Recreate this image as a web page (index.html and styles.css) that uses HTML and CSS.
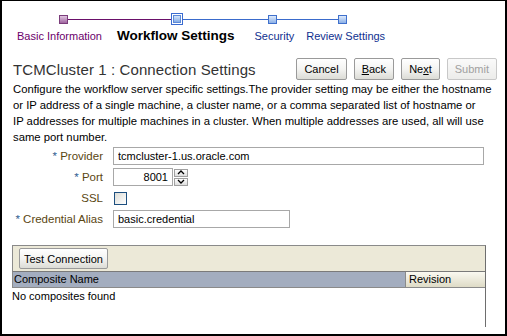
FILE: index.html
```html
<!DOCTYPE html>
<html>
<head>
<meta charset="utf-8">
<title>TCMCluster 1 : Connection Settings</title>
<link rel="stylesheet" href="styles.css">
</head>
<body>
<div class="frame">
  <div class="train">
    <div class="stop">
      <div class="track"><span class="seg"></span><span class="mark visited"></span><span class="seg purple"></span></div>
      <div class="lbl visited-lbl">Basic Information</div>
    </div>
    <div class="stop stop-current">
      <div class="track"><span class="seg purple"></span><span class="mark current"><span class="inner"></span></span><span class="seg blue"></span></div>
      <div class="lbl current-lbl">Workflow Settings</div>
    </div>
    <div class="stop stop-security">
      <div class="track"><span class="seg blue"></span><span class="mark todo"></span><span class="seg blue"></span></div>
      <div class="lbl todo-lbl">Security</div>
    </div>
    <div class="stop stop-review">
      <div class="track"><span class="seg blue"></span><span class="mark todo"></span><span class="seg"></span></div>
      <div class="lbl todo-lbl">Review Settings</div>
    </div>
  </div>

  <div class="content">
    <div class="titlerow">
      <h1 class="title">TCMCluster 1 : Connection Settings</h1>
      <div class="buttons">
        <button class="btn">Cancel</button>
        <button class="btn"><u>B</u>ack</button>
        <button class="btn">Ne<u>x</u>t</button>
        <button class="btn disabled">Submit</button>
      </div>
    </div>
    <p class="desc">Configure the workflow server specific settings.The provider setting may be either the hostname or IP address of a single machine, a cluster name, or a comma separated list of hostname or<br>IP addresses for multiple machines in a cluster. When multiple addresses are used, all will use same port number.</p>

    <div class="form">
      <label class="flabel"><span class="req">*</span> Provider</label>
      <div class="field"><input class="text wide" value="tcmcluster-1.us.oracle.com"></div>

      <label class="flabel"><span class="req">*</span> Port</label>
      <div class="field port">
        <input class="text num" value="8001">
        <div class="spin">
          <span class="sbtn"><svg width="8" height="5" viewBox="0 0 8 5"><path d="M1 4 L4 1 L7 4" fill="none" stroke="#000" stroke-width="1.3"/></svg></span>
          <span class="sbtn"><svg width="8" height="5" viewBox="0 0 8 5"><path d="M1 1 L4 4 L7 1" fill="none" stroke="#000" stroke-width="1.3"/></svg></span>
        </div>
      </div>

      <label class="flabel">SSL</label>
      <div class="field"><span class="check"></span></div>

      <label class="flabel"><span class="req">*</span> Credential Alias</label>
      <div class="field"><input class="text mid" value="basic.credential"></div>
    </div>

    <div class="panel">
      <div class="toolbar"><button class="btn tbtn">Test Connection</button></div>
      <div class="thead">
        <div class="th name">Composite Name</div>
        <div class="th rev">Revision</div>
      </div>
      <div class="tbody">No composites found</div>
    </div>
  </div>
</div>
</body>
</html>
```

FILE: styles.css
```css
html, body {
  margin: 0;
  padding: 0;
  background: #fff;
}
.frame {
  width: 507px;
  height: 336px;
  box-sizing: border-box;
  border: 2px solid #000;
  border-top-width: 1px;
  background: #fff;
  font-family: "Liberation Sans", Arial, sans-serif;
  font-size: 11px;
  color: #000;
  overflow: hidden;
}
.train {
  display: flex;
  padding: 12px 0 0 7px;
}
.stop {
  display: flex;
  flex-direction: column;
  align-items: stretch;
  padding: 0 8px;
}
.stop-current { padding-left: 7px; padding-right: 10px; }
.stop-security { padding-left: 10px; padding-right: 6px; }
.stop-review { padding-left: 6px; }
.track {
  display: grid;
  grid-template-columns: 1fr auto 1fr;
  align-items: center;
  height: 12px;
  margin: 0 -8px;
}
.stop-current .track { margin: 0 -10px 0 -7px; }
.stop-security .track { margin: 0 -6px 0 -10px; }
.stop-review .track { margin: 0 0 0 -6px; }
.stop:first-child .track { margin-left: 0; }
.seg { height: 1px; }
.seg.purple { background: #6a0f6a; }
.seg.blue { background: #3a6bcc; }
.mark {
  display: block;
  box-sizing: border-box;
}
.mark.visited {
  width: 9px; height: 9px;
  border: 1px solid #7b3d7b;
  background: linear-gradient(#e0c4e0, #a066a0);
}
.mark.todo {
  width: 9px; height: 9px;
  border: 1px solid #3f70cc;
  background: linear-gradient(#dce9fb, #8cb0e6);
}
.mark.current {
  width: 12px; height: 12px;
  border: 1px solid #3a6bd0;
  padding: 1px;
  background: #fff;
}
.mark.current .inner {
  display: block;
  width: 100%; height: 100%;
  box-sizing: border-box;
  border: 1px solid #5d8ad8;
  background: linear-gradient(#d4e4fa, #84abe4);
}
.lbl {
  margin-top: 4px;
  line-height: 14px;
  white-space: nowrap;
  text-align: center;
}
.visited-lbl { color: #6b006b; font-size: 11px; }
.current-lbl { color: #000; font-weight: bold; font-size: 13.5px; }
.todo-lbl { color: #0f2f8f; font-size: 11px; }

.content {
  padding: 0 8px 0 11px;
}
.titlerow {
  display: flex;
  align-items: center;
  justify-content: space-between;
  margin-top: 15px;
}
.title {
  margin: 0;
  font-size: 15px;
  font-weight: normal;
  color: #333;
  letter-spacing: 0.1px;
}
.buttons {
  display: flex;
  gap: 7px;
}
.btn {
  font-family: inherit;
  font-size: 11px;
  height: 22px;
  padding: 0 7px;
  border: 1px solid #9a9a9a;
  border-radius: 2px;
  background: linear-gradient(#ffffff, #f4f4f2 50%, #dcdcd6);
  color: #000;
}
.btn.disabled {
  color: #a0a0a0;
  border-color: #c8c8c8;
  background: linear-gradient(#fafafa, #ececea);
}
.desc {
  margin: 1px -4px 0 0;
  line-height: 16px;
  font-size: 11.3px;
}
.form {
  display: grid;
  grid-template-columns: 90px 1fr;
  column-gap: 10px;
  row-gap: 3px;
  margin-top: 2px;
  align-items: center;
}
.flabel {
  text-align: right;
  color: #5a4612;
  font-size: 11.5px;
  white-space: nowrap;
}
.req { color: #2f5d91; }
.field {
  display: flex;
  align-items: center;
  height: 18px;
}
.text {
  box-sizing: border-box;
  height: 18px;
  border: 1px solid #a8a8a8;
  font-family: inherit;
  font-size: 11px;
  padding: 0 4px;
  color: #000;
  background: #fff;
}
.text.wide { width: 371px; }
.text.mid { width: 177px; }
.text.num { width: 60px; text-align: right; }
.spin {
  display: flex;
  flex-direction: column;
  gap: 1px;
  margin-left: 1px;
}
.sbtn {
  box-sizing: border-box;
  width: 14px;
  height: 8px;
  border: 1px solid #a0a0a0;
  background: linear-gradient(#fff, #dedede);
  display: flex;
  align-items: center;
  justify-content: center;
}
.sbtn svg { display: block; }
.check {
  display: block;
  box-sizing: border-box;
  width: 13px;
  height: 13px;
  margin-left: 1px;
  border: 1px solid #1d4f7f;
  background: linear-gradient(135deg, #dcdcd6, #ffffff);
}
.panel {
  margin: 17px 11px 0 -1px;
  border-top: 1px solid #8a8a8a;
  border-right: 1px solid #6e6e6e;
  height: 81px;
}
.toolbar {
  background: #ece9d8;
  border-left: 1px solid #8a8a8a;
  border-bottom: 1px solid #7a7a7a;
  padding: 2px 5px 2px 6px;
  height: 21px;
}
.tbtn {
  height: 21px;
  padding: 0 4px;
  font-size: 11px;
}
.thead {
  display: flex;
  height: 15px;
  border-left: 1px solid #8a8a8a;
  border-bottom: 1px solid #8a8a8a;
  font-size: 11px;
  line-height: 15px;
}
.th.name {
  flex: 1;
  background: #a3adbf;
  padding-left: 1px;
}
.th.rev {
  width: 76px;
  padding-left: 3px;
  border-left: 1px solid #8a8a8a;
  background: linear-gradient(#faf9f1, #dedbc6);
}
.tbody {
  font-size: 11px;
  line-height: 16px;
}
```
